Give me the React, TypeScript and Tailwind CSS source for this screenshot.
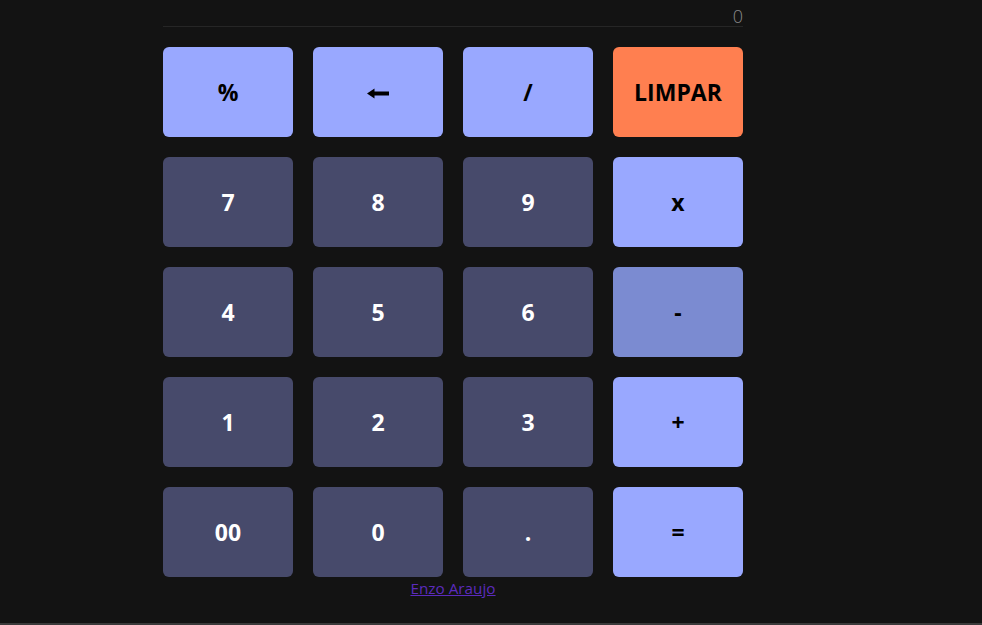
import React, { useState } from 'react';

type Key = { label: string; kind: 'op' | 'num' | 'clear' | 'active' };

const keys: Key[] = [
  { label: '%', kind: 'op' },
  { label: '←', kind: 'op' },
  { label: '/', kind: 'op' },
  { label: 'LIMPAR', kind: 'clear' },
  { label: '7', kind: 'num' },
  { label: '8', kind: 'num' },
  { label: '9', kind: 'num' },
  { label: 'x', kind: 'op' },
  { label: '4', kind: 'num' },
  { label: '5', kind: 'num' },
  { label: '6', kind: 'num' },
  { label: '-', kind: 'active' },
  { label: '1', kind: 'num' },
  { label: '2', kind: 'num' },
  { label: '3', kind: 'num' },
  { label: '+', kind: 'op' },
  { label: '00', kind: 'num' },
  { label: '0', kind: 'num' },
  { label: '.', kind: 'num' },
  { label: '=', kind: 'op' },
];

const kindClass = {
  op: 'bg-[#99a8ff] text-black',
  num: 'bg-[#474a6b] text-white',
  clear: 'bg-[#ff7f50] text-black',
  active: 'bg-[#7b8bd1] text-black',
};

const App = () => {
  const [display] = useState('0');

  return (
    <div
      className="min-h-[625px] bg-[#131313] border-b-2 border-[#3a3a3a] box-border"
      style={{ fontFamily: '"Open Sans", "Noto Sans", sans-serif' }}
    >
      <div className="w-[580px] ml-[163px] pt-[6px]">
        {/* visor */}
        <div className="h-[21px] border-b border-[#262626] text-right text-[18px] leading-[20px] text-[#8a8a8a] font-light">
          {display}
        </div>
        <div className="grid grid-cols-4 gap-5 mt-5">
          {keys.map((k) => (
            <button
              key={k.label}
              className={`h-[90px] rounded-md font-bold text-[23px] leading-none pt-[1px] flex items-center justify-center ${kindClass[k.kind]}`}
            >
              {k.label === '←' ? (
                <svg width="23" height="11" viewBox="0 0 23 11" className="mt-[1px]">
                  <path d="M0 5.5 L7.5 0.5 L7.5 3.5 L22 3.5 L22 7.5 L7.5 7.5 L7.5 10.5 Z" fill="black" />
                </svg>
              ) : (
                k.label
              )}
            </button>
          ))}
        </div>
        <div className="text-center -mt-[1px]">
          <a href="#" className="text-[15.3px] text-[#5b2bbd] underline">
            Enzo Araujo
          </a>
        </div>
      </div>
    </div>
  );
};

export default App;
